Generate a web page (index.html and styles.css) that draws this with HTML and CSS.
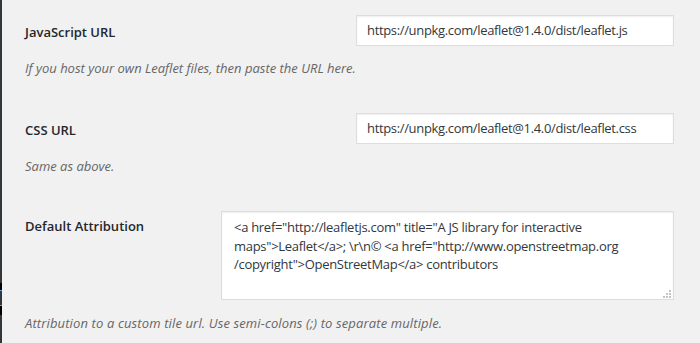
FILE: index.html
```html
<!DOCTYPE html>
<html lang="en">
<head>
<meta charset="utf-8">
<title>Leaflet settings</title>
<link rel="stylesheet" href="styles.css">
</head>
<body>
<div class="frame">
  <div class="edge"><span class="mark mark-a"></span><span class="mark mark-b"></span></div>
  <div class="settings">
    <section class="field">
      <div class="row">
        <div class="label">JavaScript URL</div>
        <div class="input">https://unpkg.com/leaflet@1.4.0/dist/leaflet.js</div>
      </div>
      <p class="desc">If you host your own Leaflet files, then paste the URL here.</p>
    </section>
    <section class="field">
      <div class="row">
        <div class="label">CSS URL</div>
        <div class="input">https://unpkg.com/leaflet@1.4.0/dist/leaflet.css</div>
      </div>
      <p class="desc">Same as above.</p>
    </section>
    <section class="field field-area">
      <div class="row">
        <div class="label label-area">Default Attribution</div>
        <div class="textarea">
          <span class="line">&lt;a href="http://leafletjs.com" title="A JS library for interactive</span>
          <span class="line">maps"&gt;Leaflet&lt;/a&gt;; \r\n© &lt;a href="http://www.openstreetmap.org</span>
          <span class="line">/copyright"&gt;OpenStreetMap&lt;/a&gt; contributors</span>
          <svg class="grip" width="9" height="9" viewBox="0 0 9 9"><g fill="#c4c4c4"><rect x="7" y="1" width="2" height="2"/><rect x="4" y="4" width="2" height="2"/><rect x="7" y="4" width="2" height="2"/><rect x="1" y="7" width="2" height="2"/><rect x="4" y="7" width="2" height="2"/><rect x="7" y="7" width="2" height="2"/></g></svg>
        </div>
      </div>
      <p class="desc">Attribution to a custom tile url. Use semi-colons (;) to separate multiple.</p>
    </section>
  </div>
</div>
</body>
</html>
```

FILE: styles.css
```css
* { box-sizing: border-box; }
html, body {
  margin: 0;
  padding: 0;
  background: #f1f1f1;
}
body {
  font-family: "Open Sans", "Noto Sans", sans-serif;
  color: #23282d;
}
.frame {
  display: flex;
  height: 343px;
}
.edge {
  position: relative;
  width: 2px;
  background: #32373c;
  flex: none;
}
.mark {
  position: absolute;
  left: 0;
  width: 2px;
  background: #000;
}
.mark-a { top: 283px; height: 8px; border-bottom: 1px solid #4fa3e0; }
.mark-b { top: 305px; height: 10px; border-top: 1px solid #4fa3e0; }
.settings {
  flex: 1;
  padding: 15px 26px 0 23px;
}
.field {
  margin-bottom: 36px;
}
.row {
  display: flex;
  justify-content: space-between;
  align-items: flex-start;
}
.label {
  font-size: 13px;
  font-weight: 600;
  line-height: 20px;
  padding-top: 7px;
}
.label-area { padding-top: 5px; }
.input {
  width: 318px;
  height: 31px;
  border: 1px solid #ddd;
  background: #fff;
  box-shadow: inset 0 1px 2px rgba(0,0,0,0.07);
  padding: 0 10px;
  font-size: 13px;
  letter-spacing: -0.34px;
  line-height: 29px;
  color: #32373c;
}
.textarea {
  position: relative;
  width: 453px;
  height: 89px;
  border: 1px solid #ddd;
  background: #fff;
  box-shadow: inset 0 1px 2px rgba(0,0,0,0.07);
  padding: 6px 12px 0;
  font-size: 13px;
  letter-spacing: -0.29px;
  line-height: 18.5px;
  color: #32373c;
}
.line { display: block; white-space: nowrap; }
.grip {
  position: absolute;
  right: 2px;
  bottom: 1px;
}
.desc {
  margin: 13px 0 0;
  font-size: 13px;
  font-style: italic;
  line-height: 18px;
  color: #666;
}
.field-area .desc { margin-top: 14px; letter-spacing: 0.13px; }
```
